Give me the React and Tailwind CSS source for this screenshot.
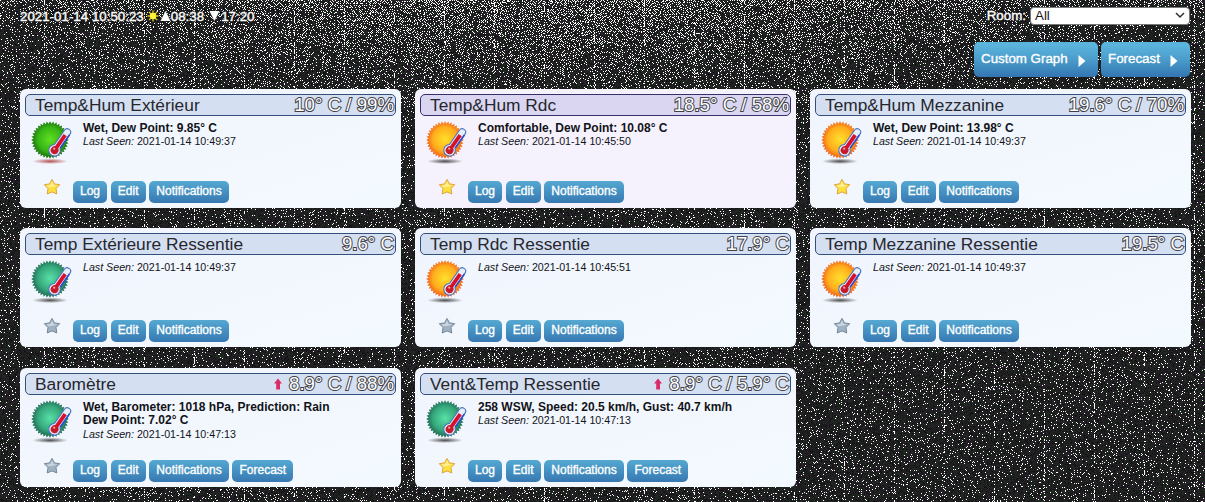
import React from 'react';

const WIDTH = 1205;
const HEIGHT = 502;

function random(seed) {
  let s = seed;
  return () => {
    s = (s + 0x6d2b79f5) | 0;
    let t = Math.imul(s ^ (s >>> 15), 1 | s);
    t = (t + Math.imul(t ^ (t >>> 7), 61 | t)) ^ t;
    return ((t ^ (t >>> 14)) >>> 0) / 4294967296;
  };
}

// Static grain: denser along the top centre, with faint vertical streaks every 50px.
function buildGrain() {
  const next = random(7);
  let white = '';
  let green = '';
  let purple = '';
  let deep = '';
  let above = new Uint8Array(WIDTH);
  for (let y = 0; y < HEIGHT; y++) {
    const row = new Uint8Array(WIDTH);
    for (let x = 0; x < WIDTH; x++) {
      const dx = (x - 540) / 420;
      const glow = Math.exp(-dx * dx) * Math.exp(-Math.pow(y / 75, 2)) * 0.22;
      const edge = Math.exp(-y / 10) * 0.12;
      const streak = x % 50 === 44;
      let density = 0.075 + glow + edge;
      if (streak) density += 0.12 + 0.25 * Math.abs(Math.sin(x * 3.1 + y / 60));
      else if (row[x - 1] || above[x]) density *= 0.25;
      const r = next();
      if (r < density) {
        row[x] = 1;
        white += `M${x} ${y}h1v1h-1z`;
      } else if ((x + y) % 2 === 0 && r > 0.8) green += `M${x} ${y}h1v1h-1z`;
      else if ((x + y) % 2 === 0 && r > 0.62) purple += `M${x} ${y}h1v1h-1z`;
      else if (r > 0.8) deep += `M${x} ${y}h1v1h-1z`;
    }
    above = row;
  }
  return { white, green, purple, deep };
}

const grain = buildGrain();

function Grain() {
  return (
    <svg className="absolute inset-0" width={WIDTH} height={HEIGHT} shapeRendering="crispEdges" aria-hidden="true">
      <path d={grain.deep} fill="#0c0c10" />
      <path d={grain.green} fill="#1f3322" />
      <path d={grain.purple} fill="#33253a" />
      <path d={grain.white} fill="#ffffff" />
    </svg>
  );
}

const BADGES = {
  green: { inner: '#5fe022', mid: '#38b516', outer: '#14640c', shadow: '#b04848' },
  orange: { inner: '#ffe02c', mid: '#ffae1c', outer: '#f0521a', shadow: '#444444' },
  teal: { inner: '#58e0a8', mid: '#36a87c', outer: '#1c5f4c', shadow: '#444444' },
};

const teeth = Array.from({ length: 72 }, (_, i) => {
  const a = (i * Math.PI) / 36;
  const r = i % 2 ? 16.4 : 18.8;
  return `${(20 + r * Math.cos(a)).toFixed(2)},${(21 + r * Math.sin(a)).toFixed(2)}`;
}).join(' ');

function TemperatureIcon({ tone, id }) {
  const c = BADGES[tone];
  return (
    <svg width="48" height="48" viewBox="0 0 48 48" className="shrink-0">
      <defs>
        <radialGradient id={`disc${id}`} cx="50%" cy="48%" r="52%">
          <stop offset="0" stopColor={c.inner} />
          <stop offset="0.62" stopColor={c.mid} />
          <stop offset="1" stopColor={c.outer} />
        </radialGradient>
        <radialGradient id={`shade${id}`}>
          <stop offset="0" stopColor={c.shadow} stopOpacity="0.95" />
          <stop offset="1" stopColor={c.shadow} stopOpacity="0" />
        </radialGradient>
      </defs>
      <ellipse cx="20" cy="42.3" rx="18" ry="2.8" fill={`url(#shade${id})`} />
      <polygon points={teeth} fill={`url(#disc${id})`} />
      <g transform="translate(24.6 31.2) rotate(35)">
        <path d="M-3.4 -4.6V-22a3.4 3.4 0 0 1 6.8 0V-4.6a5.8 5.8 0 1 1 -6.8 0z" fill="#e6eefa" stroke="#4a72b8" strokeWidth="1.1" />
        <path d="M3.4 -21V-5" stroke="#2450d0" strokeWidth="1.5" />
        <path d="M0 0V-18.5" stroke="#d8102c" strokeWidth="3.8" />
        <circle r="3.9" fill="#c51b2c" />
        <circle cx="-1.2" cy="-1" r="1.1" fill="#f7a0a0" />
      </g>
    </svg>
  );
}

function Star({ active }) {
  return (
    <svg width="18" height="18" viewBox="0 0 18 18" className="-mt-[3px]">
      <path
        d="M9 1.4l2.5 4.5 5.2.8-3.7 3.8.8 5.5L9 13.9l-4.8 2.1.8-5.5L1.3 6.7l5.2-.8z"
        fill={active ? '#fde040' : '#a0b2c2'}
        stroke={active ? '#e0a43c' : '#75899c'}
        strokeWidth="1"
        strokeLinejoin="round"
      />
      <path d="M9 3.2l1.6 3.8 3.6.5-4 1.2L5 9.2l-1.2-1.7 3.6-.5z" fill="#ffffff" opacity="0.45" />
    </svg>
  );
}

function SmallButton({ children }) {
  return (
    <button className="h-[22px] rounded-[5px] bg-linear-to-b from-[#55a9d2] via-[#4590c2] to-[#3778b2] px-[7px] pb-[2px] text-[12px] leading-[20px] text-white [-webkit-text-stroke:0.35px_white]">
      {children}
    </button>
  );
}

function BigButton({ children, className }) {
  return (
    <button className={`flex h-[35px] items-center justify-between rounded-[5px] bg-linear-to-b from-[#5ab4dc] from-10% via-[#4a9ccb] via-50% to-[#3375b2] pr-[12px] pl-[7px] text-[13.33px] text-white [-webkit-text-stroke:0.35px_white] ${className}`}>
      <span className="pb-[2px]">{children}</span>
      <svg width="8" height="12" viewBox="0 0 8 12" className="mt-[2px]">
        <path d="M0.5 0L7.5 6L0.5 12z" fill="#ffffff" />
      </svg>
    </button>
  );
}

const BASE = ['Log', 'Edit', 'Notifications'];
const DEVICES = [
  { name: 'Temp&Hum Extérieur', value: '10° C / 99%', status: ['Wet, Dew Point: 9.85° C'], seen: '2021-01-14 10:49:37', tone: 'green', star: true },
  { name: 'Temp&Hum Rdc', value: '18.5° C / 58%', status: ['Comfortable, Dew Point: 10.08° C'], seen: '2021-01-14 10:45:50', tone: 'orange', star: true, warm: true },
  { name: 'Temp&Hum Mezzanine', value: '19.6° C / 70%', status: ['Wet, Dew Point: 13.98° C'], seen: '2021-01-14 10:49:37', tone: 'orange', star: true },
  { name: 'Temp Extérieure Ressentie', value: '9.6° C', status: [], seen: '2021-01-14 10:49:37', tone: 'teal' },
  { name: 'Temp Rdc Ressentie', value: '17.9° C', status: [], seen: '2021-01-14 10:45:51', tone: 'orange' },
  { name: 'Temp Mezzanine Ressentie', value: '19.5° C', status: [], seen: '2021-01-14 10:49:37', tone: 'orange' },
  { name: 'Baromètre', value: '8.9° C / 88%', status: ['Wet, Barometer: 1018 hPa, Prediction: Rain', 'Dew Point: 7.02° C'], seen: '2021-01-14 10:47:13', tone: 'teal', trend: true, forecast: true },
  { name: 'Vent&Temp Ressentie', value: '8.9° C / 5.9° C', status: ['258 WSW, Speed: 20.5 km/h, Gust: 40.7 km/h'], seen: '2021-01-14 10:47:13', tone: 'teal', star: true, trend: true, forecast: true },
];

function DeviceCard({ device, id }) {
  const { name, value, status, seen, tone, star, trend, forecast, warm } = device;
  return (
    <section className={`flex h-[119px] flex-col rounded-[6px] px-[5px] pt-[5px] ${warm ? 'bg-[#f6f2fd]' : 'bg-linear-to-br from-[#f1f4fd] to-[#f3faff]'}`}>
      <header className={`flex h-[22px] w-[371px] items-center justify-between rounded-[5px] border pr-[1px] pl-[9px] ${warm ? 'border-[#35306a] bg-[#dad6f2]' : 'border-[#334f7c] bg-[#d5dff2]'}`}>
        <h2 className="text-[17.33px] leading-5 whitespace-nowrap text-[#25272d]">{name}</h2>
        <div className="flex items-center gap-[6px]">
          {trend && (
            <svg width="10" height="12" viewBox="0 0 10 12">
              <path d="M5 0.5L9 5.5H7V11.5H3.2V5.5H1z" fill="#d82b68" />
            </svg>
          )}
          <span className="text-[18.67px] leading-5 whitespace-nowrap text-white [-webkit-text-stroke:2px_#3d4047] [paint-order:stroke_fill]">{value}</span>
        </div>
      </header>
      <div className="flex h-[62px] pl-[5px]">
        <div className="mt-[3px]"><TemperatureIcon tone={tone} id={id} /></div>
        <div className="ml-[5px] pt-[6px] text-[#111318]">
          {status.map((line) => (
            <p key={line} className="text-[12px] leading-[13.5px] font-bold whitespace-nowrap">{line}</p>
          ))}
          <p className="text-[10.67px] leading-[13px] whitespace-nowrap"><i>Last Seen:</i> {seen}</p>
        </div>
      </div>
      <div className="mt-[3px] flex items-start pl-[18px]">
        <Star active={star} />
        <div className="ml-[12px] flex gap-[3.8px]">
          {(forecast ? [...BASE, 'Forecast'] : BASE).map((label) => (
            <SmallButton key={label}>{label}</SmallButton>
          ))}
        </div>
      </div>
    </section>
  );
}

export default function App() {
  return (
    <div className="relative h-[502px] w-[1205px] overflow-hidden bg-[#1d1d1d] font-['Liberation_Sans',Arial,sans-serif]">
      <Grain />
      <main className="relative">
        <div className="flex h-[32px] items-center justify-between pr-[15px] pl-[20px] text-[13.33px] text-white [-webkit-text-stroke:0.4px_white]">
          <div className="flex items-center pt-[1px] [text-shadow:0_0_2px_#151515,0_0_2px_#151515,0_0_2px_#151515,0_0_3px_#151515]">
            <span>2021-01-14 10:50:23</span>
            <svg width="12" height="12" viewBox="0 0 12 12" className="ml-[3px]">
              <circle cx="6" cy="6" r="6" fill="#1d1d1d" />
              <path d="M6 0.5V11.5M0.5 6H11.5M2 2L10 10M10 2L2 10" stroke="#e0cc18" strokeWidth="1.3" />
              <circle cx="6" cy="6" r="3.2" fill="#fff23c" />
            </svg>
            <svg width="11" height="12" viewBox="0 0 11 12" className="ml-[1px]">
              <path d="M5.5 1L10.5 11H0.5z" fill="#ffffff" stroke="#1d1d1d" strokeWidth="1" style={{ paintOrder: 'stroke' }} />
            </svg>
            <span>08:38</span>
            <svg width="11" height="12" viewBox="0 0 11 12" className="ml-[5px]">
              <path d="M5.5 11L10.5 1H0.5z" fill="#ffffff" stroke="#1d1d1d" strokeWidth="1" style={{ paintOrder: 'stroke' }} />
            </svg>
            <span className="pl-[1px]">17:20</span>
          </div>
          <div className="flex items-center">
            <span className="mr-[4px] [text-shadow:0_0_2px_#151515,0_0_2px_#151515,0_0_2px_#151515,0_0_3px_#151515]">Room:</span>
            <div className="flex h-[18px] w-[160px] items-center justify-between rounded-[4px] border border-[#777777] bg-white pr-[4px] pl-[4px] text-[#16161c] [-webkit-text-stroke:0px]">
              <span>All</span>
              <svg width="10" height="7" viewBox="0 0 10 7" fill="none" stroke="#303030" strokeWidth="1.5">
                <path d="M1 1L5 5L9 1" />
              </svg>
            </div>
          </div>
        </div>
        <div className="mt-[10px] flex justify-end gap-[3px] pr-[15px]">
          <BigButton className="w-[124px]">Custom Graph</BigButton>
          <BigButton className="w-[89px]">Forecast</BigButton>
        </div>
        <div className="mt-[11.8px] grid grid-cols-[381px_381px_381px] gap-x-[14px] gap-y-[20.5px] pl-[20px]">
          {DEVICES.map((device, i) => (
            <DeviceCard key={device.name} device={device} id={i} />
          ))}
        </div>
      </main>
    </div>
  );
}
